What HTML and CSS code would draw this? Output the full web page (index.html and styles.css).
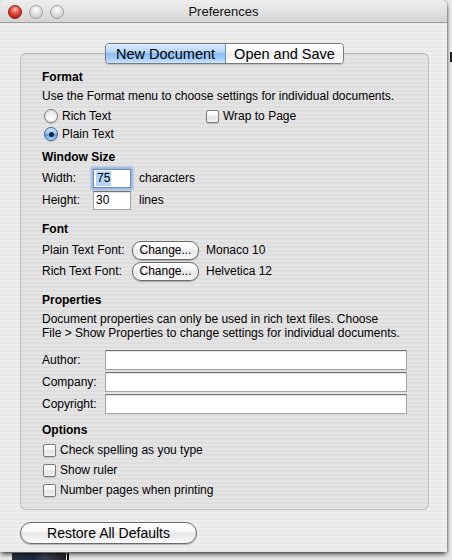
FILE: index.html
```html
<!DOCTYPE html>
<html>
<head>
<meta charset="utf-8">
<title>Preferences</title>
<link rel="stylesheet" href="styles.css">
</head>
<body>
<div class="desktop">
  <div class="dock-item"></div>
  <div class="dock-sep"></div>
  <div class="edge-mark"></div>
  <div class="window">
    <div class="titlebar">
      <div class="lights">
        <span class="light red"></span>
        <span class="light gray"></span>
        <span class="light gray"></span>
      </div>
      <div class="title">Preferences</div>
      <div></div>
    </div>
    <div class="content">
      <div class="tabs">
        <div class="tab sel">New Document</div>
        <div class="tab">Open and Save</div>
      </div>
      <div class="group">
        <div class="section first">
          <div class="row head">Format</div>
          <div class="row desc-row">Use the Format menu to choose settings for individual documents.</div>
          <div class="row">
            <span class="radio-opt col1"><span class="radio"></span>Rich Text</span>
            <span class="check-opt"><span class="check"></span>Wrap to Page</span>
          </div>
          <div class="row tight">
            <span class="radio-opt col1"><span class="radio on"></span>Plain Text</span>
          </div>
        </div>
        <div class="section winsize">
          <div class="row head">Window Size</div>
          <div class="row tall">
            <span class="lbl lbl-size">Width:</span>
            <span class="field small focus"><span class="selected">75</span></span>
            <span class="unit">characters</span>
          </div>
          <div class="row tall">
            <span class="lbl lbl-size">Height:</span>
            <span class="field small">30</span>
            <span class="unit">lines</span>
          </div>
        </div>
        <div class="section">
          <div class="row head">Font</div>
          <div class="row tall">
            <span class="lbl lbl-font">Plain Text Font:</span>
            <span class="btn small-btn">Change...</span>
            <span class="unit">Monaco 10</span>
          </div>
          <div class="row tall near">
            <span class="lbl lbl-font">Rich Text Font:</span>
            <span class="btn small-btn">Change...</span>
            <span class="unit">Helvetica 12</span>
          </div>
        </div>
        <div class="section">
          <div class="row head">Properties</div>
          <div class="para">Document properties can only be used in rich text files. Choose<br>File &gt; Show Properties to change settings for individual documents.</div>
          <div class="row tall spaced">
            <span class="lbl lbl-prop">Author:</span>
            <span class="field wide"></span>
          </div>
          <div class="row tall">
            <span class="lbl lbl-prop">Company:</span>
            <span class="field wide"></span>
          </div>
          <div class="row tall">
            <span class="lbl lbl-prop">Copyright:</span>
            <span class="field wide"></span>
          </div>
        </div>
        <div class="section options">
          <div class="row head">Options</div>
          <div class="row"><span class="check-opt opt"><span class="check"></span>Check spelling as you type</span></div>
          <div class="row"><span class="check-opt opt"><span class="check"></span>Show ruler</span></div>
          <div class="row"><span class="check-opt opt"><span class="check"></span>Number pages when printing</span></div>
        </div>
      </div>
      <div class="btn restore">Restore All Defaults</div>
    </div>
  </div>
</div>
</body>
</html>
```
FILE: styles.css
```css
* { box-sizing: border-box; }
html, body { margin: 0; padding: 0; }
body {
  width: 452px;
  height: 560px;
  overflow: hidden;
  font-family: "Liberation Sans", Arial, sans-serif;
  font-size: 12px;
  color: #000;
}
.desktop {
  position: relative;
  width: 452px;
  height: 560px;
  background: #e8e8e8;
}
.dock-item {
  position: absolute;
  left: 12px;
  top: 553px;
  width: 54px;
  height: 7px;
  background: linear-gradient(90deg, #2a2f3a 0, #1e2a44 40%, #3b4150 60%, #222 100%);
}
.dock-sep {
  position: absolute;
  left: 67px;
  top: 553px;
  width: 2px;
  height: 7px;
  background: #111;
}
.edge-mark {
  position: absolute;
  left: 450px;
  top: 52px;
  width: 2px;
  height: 10px;
  background: #222;
}
.window {
  position: relative;
  width: 447px;
  height: 552px;
  border-radius: 6px 6px 0 0;
  overflow: hidden;
  box-shadow: 0 3px 5px -1px rgba(0,0,0,0.75), 1px 0 2px rgba(0,0,0,0.25);
  background: repeating-linear-gradient(to bottom, #efefef 0, #efefef 2px, #e8e8e8 2px, #e8e8e8 4px);
}
.titlebar {
  height: 23px;
  display: grid;
  grid-template-columns: 1fr auto 1fr;
  align-items: center;
  background: linear-gradient(to bottom, #eeeeee 0%, #e2e2e2 50%, #d3d3d3 100%);
  border-bottom: 1px solid #9c9c9c;
}
.lights {
  display: flex;
  gap: 7px;
  padding-left: 8px;
  padding-top: 1px;
}
.light {
  width: 14px;
  height: 14px;
  border-radius: 50%;
  display: block;
}
.light.red {
  background: radial-gradient(circle at 50% 30%, #fbc3bb 0, #e85a4e 35%, #c8261c 70%, #9a1410 100%);
  border: 1px solid #8a1f1a;
}
.light.gray {
  background: radial-gradient(circle at 50% 30%, #ffffff 0, #e4e4e4 40%, #cdcdcd 75%, #bdbdbd 100%);
  border: 1px solid #a2a2a2;
}
.title {
  font-size: 13px;
  color: #111;
  padding-top: 1px;
}
.content {
  display: flex;
  flex-direction: column;
}
.tabs {
  position: relative;
  z-index: 1;
  display: flex;
  width: 239px;
  height: 21px;
  margin: 20px 0 0 105px;
  border: 1px solid #7a7a7a;
  border-radius: 4px;
  overflow: hidden;
  box-shadow: 0 1px 1px rgba(0,0,0,0.18);
}
.tab {
  display: flex;
  align-items: center;
  justify-content: center;
  font-size: 14.5px;
  flex: 1;
  background: linear-gradient(to bottom, #ffffff 0%, #f6f6f6 45%, #ececec 52%, #f7f7f7 85%, #ffffff 100%);
}
.tab.sel {
  flex: none;
  width: 120px;
  border-right: 1px solid #6f8fb4;
  background: linear-gradient(to bottom, #dcecfc 0%, #b8d6f6 40%, #8cbdf2 52%, #9fcbf7 75%, #c9e4fd 100%);
}
.group {
  margin: -11px 0 0 20px;
  width: 409px;
  padding: 14px 0 10px 21px;
  border: 1px solid rgba(0,0,0,0.16);
  border-top-color: rgba(0,0,0,0.22);
  border-radius: 6px;
  background: rgba(0,0,0,0.045);
}
.section { margin-top: 10px; }
.section.first { margin-top: 0; }
.section.winsize { margin-top: 5px; }
.section.options { margin-top: 7px; }
.row {
  display: flex;
  align-items: center;
  height: 18px;
  margin-top: 2px;
  white-space: nowrap;
}
.row.head {
  margin-top: 0;
  font-weight: bold;
}
.row.desc-row { margin-top: 1px; }
.row.tight { margin-top: 0; }
.row.tall { height: 20px; }
.row.near { margin-top: 1px; }
.row.spaced { margin-top: 10px; }
.para {
  margin-top: 3px;
  line-height: 14px;
  white-space: nowrap;
}
.radio-opt, .check-opt {
  display: flex;
  align-items: center;
}
.radio-opt { gap: 4px; margin-left: 2px; }
.col1 { width: 162px; }
.check-opt { gap: 4px; }
.check-opt.opt { margin-left: 1px; }
.radio {
  width: 14px;
  height: 14px;
  border-radius: 50%;
  border: 1px solid #7b7b7b;
  background: radial-gradient(circle at 50% 75%, #ffffff 0, #f4f4f4 40%, #d9d9d9 100%);
  box-shadow: 0 1px 1px rgba(0,0,0,0.15);
  display: flex;
  align-items: center;
  justify-content: center;
}
.radio.on {
  border-color: #3c5f8c;
  background: linear-gradient(to bottom, #d4e7fb 0%, #9cc6f3 45%, #5e9be6 55%, #8ec2f7 85%, #c2e1fd 100%);
}
.radio.on::after {
  content: "";
  width: 5px;
  height: 5px;
  border-radius: 50%;
  background: #14233a;
}
.check {
  width: 13px;
  height: 13px;
  border: 1px solid #7b7b7b;
  border-radius: 2px;
  background: linear-gradient(to bottom, #ffffff 0%, #f3f3f3 45%, #e2e2e2 55%, #f2f2f2 100%);
  box-shadow: 0 1px 1px rgba(0,0,0,0.15);
}
.lbl { flex: none; }
.lbl-size { width: 51px; }
.lbl-font { width: 90px; }
.lbl-prop { width: 63px; }
.field {
  display: flex;
  align-items: center;
  background: #fff;
  border: 1px solid #a3a3a3;
  border-top-color: #727272;
  box-shadow: inset 0 1px 1px rgba(0,0,0,0.12);
}
.field.small {
  width: 38px;
  height: 19px;
  padding-left: 2px;
}
.field.wide {
  width: 302px;
  height: 20px;
}
.field.focus {
  border-color: #6e8fb8;
  box-shadow: 0 0 0 1px #93b7e2, 0 0 2px 2px rgba(110,160,225,0.7);
}
.selected {
  background: #b5d4f7;
  padding: 0 1px;
  line-height: 15px;
}
.unit { margin-left: 8px; }
.btn {
  display: flex;
  align-items: center;
  justify-content: center;
  border: 1px solid #6a6a6a;
  background: linear-gradient(to bottom, #ffffff 0%, #f7f7f7 40%, #e8e8e8 52%, #f4f4f4 85%, #ffffff 100%);
  box-shadow: 0 1px 1px rgba(0,0,0,0.25);
}
.small-btn {
  width: 67px;
  height: 19px;
  border-radius: 9px;
}
.btn.small-btn + .unit { margin-left: 7px; }
.restore {
  margin: 12px 0 0 20px;
  width: 177px;
  height: 22px;
  border-radius: 11px;
  font-size: 14px;
}
```
